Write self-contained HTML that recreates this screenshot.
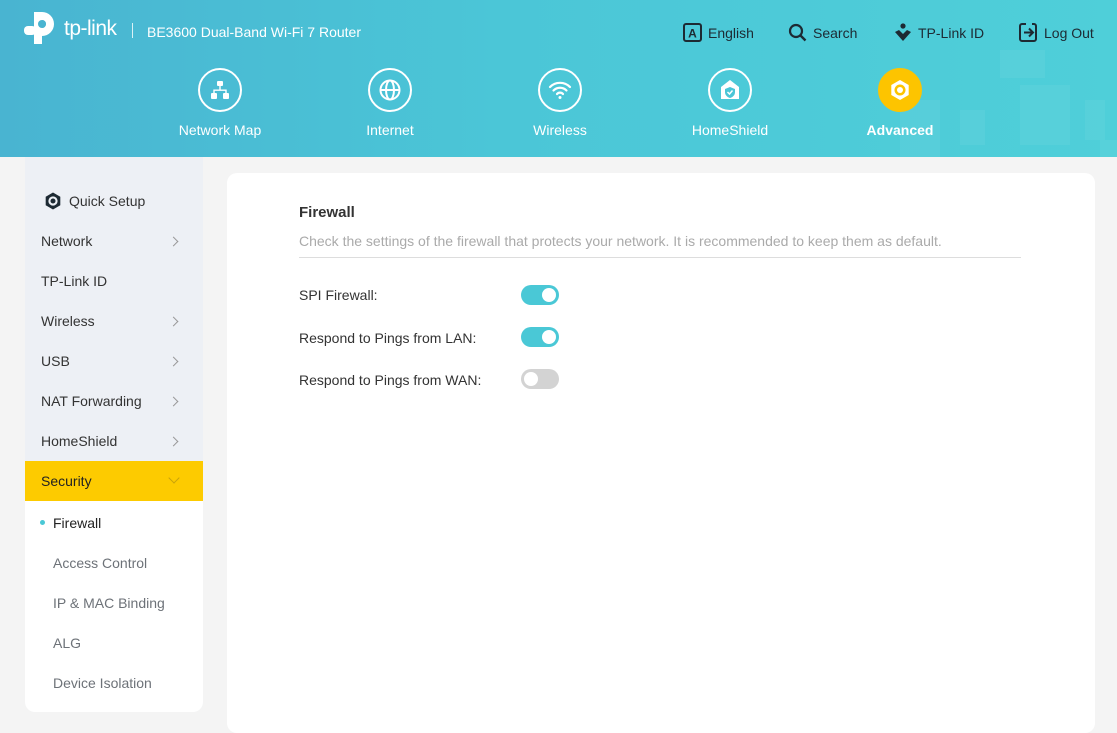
<!DOCTYPE html>
<html><head><meta charset="utf-8"><style>
*{margin:0;padding:0;box-sizing:border-box}
body{width:1117px;height:716px;overflow:hidden;background:#f4f4f4;font-family:"Liberation Sans",Arial,sans-serif;position:relative}
.hdr{position:absolute;left:0;top:0;width:1117px;height:157px;background:linear-gradient(90deg,#49b4d1 0%,#4bc6d7 45%,#4fcfd9 100%);overflow:hidden}
.sq{position:absolute;background:rgba(255,255,255,.05)}
.abs{position:absolute}
.top{position:absolute;top:23px;font-size:14px;color:#1d2a33;display:flex;align-items:center;gap:6px}
.nav{position:absolute;top:68px;width:120px;text-align:center;color:#fff;font-size:14px}
.nav .c{width:44px;height:44px;border:2px solid #fff;border-radius:50%;margin:0 auto 10px;display:flex;align-items:center;justify-content:center}
.side{position:absolute;left:25px;top:157px;width:178px;height:555px;background:#edf0f5;border-radius:0 0 10px 10px;overflow:hidden}
.it{position:absolute;left:16px;font-size:14px;color:#333}
.chev{position:absolute;left:145px;width:7px;height:7px;border-right:1.5px solid #999;border-top:1.5px solid #999;transform:rotate(45deg)}
.sub{position:absolute;left:0;top:344px;width:178px;height:211px;background:#fff}
.si{position:absolute;left:28px;font-size:14px;color:#6d7278}
.card{position:absolute;left:227px;top:173px;width:868px;height:560px;background:#fff;border-radius:10px}
.lbl{position:absolute;left:72px;font-size:14px;color:#333}
.tg{position:absolute;left:294px;width:38px;height:20px;border-radius:10px;background:#4ac8d6}
.tg:after{content:"";position:absolute;top:3px;right:3px;width:14px;height:14px;border-radius:50%;background:#fff}
.tg.off{background:#d3d3d3}
.tg.off:after{right:auto;left:3px}
</style></head><body>
<div class="hdr">
 <div class="sq" style="left:1000px;top:50px;width:45px;height:28px"></div>
 <div class="sq" style="left:1020px;top:85px;width:50px;height:60px"></div>
 <div class="sq" style="left:960px;top:110px;width:25px;height:35px"></div>
 <div class="sq" style="left:900px;top:100px;width:40px;height:57px"></div>
 <div class="sq" style="left:1085px;top:100px;width:20px;height:40px"></div>
 <div class="sq" style="left:1100px;top:140px;width:17px;height:17px"></div>
 <svg class="abs" style="left:24px;top:12px" width="30" height="32" viewBox="0 0 30 32"><path d="M10 0h8a12 12 0 0 1 0 24h-2v-8h2a4 4 0 0 0 0-8h-0v24h-8V12" fill="#fff"/><rect x="0" y="14" width="12" height="9" rx="4" fill="#fff"/><circle cx="18" cy="12" r="4" fill="#49b4d1"/></svg>
 <div class="abs" style="left:64px;top:17px;color:#fff;font-size:21px;letter-spacing:-.5px">tp-link</div>
 <div class="abs" style="left:132px;top:23px;width:1px;height:15px;background:#fff;opacity:.8"></div>
 <div class="abs" style="left:147px;top:24px;color:#fff;font-size:14px">BE3600 Dual-Band Wi-Fi 7 Router</div>
 <div class="top" style="left:683px"><svg width="19" height="19" viewBox="0 0 19 19"><rect x="1" y="1" width="17" height="17" rx="2" fill="none" stroke="#1d2a33" stroke-width="2"/><text x="9.5" y="14.5" font-size="12" font-weight="bold" text-anchor="middle" fill="#1d2a33" font-family="Liberation Sans">A</text></svg>English</div>
 <div class="top" style="left:788px"><svg width="19" height="19" viewBox="0 0 19 19"><circle cx="8" cy="8" r="6" fill="none" stroke="#1d2a33" stroke-width="2.2"/><path d="M12.5 12.5l5 5" stroke="#1d2a33" stroke-width="2.4"/></svg>Search</div>
 <div class="top" style="left:894px"><svg width="18" height="19" viewBox="0 0 18 19"><circle cx="9" cy="3" r="2.6" fill="#1d2a33"/><path d="M1 9l8 9 8-9-4-2-4 4-4-4z" fill="#1d2a33"/></svg>TP-Link ID</div>
 <div class="top" style="left:1019px"><svg width="19" height="19" viewBox="0 0 19 19"><path d="M7 1H3a2 2 0 0 0-2 2v13a2 2 0 0 0 2 2h12a2 2 0 0 0 2-2V3a2 2 0 0 0-2-2h-2" fill="none" stroke="#1d2a33" stroke-width="2"/><path d="M5 9.5h9M10 5.5l4 4-4 4" fill="none" stroke="#1d2a33" stroke-width="2"/></svg>Log Out</div>
 <div class="nav" style="left:160px"><div class="c"><svg width="22" height="22" viewBox="0 0 22 22" fill="#fff"><rect x="8" y="2" width="6" height="5" rx="1"/><rect x="2" y="14" width="6" height="6" rx="1"/><rect x="14" y="14" width="6" height="6" rx="1"/><path d="M10.3 7h1.4v3.5H17.7v3.5h-1.4v-2.1H5.7v2.1H4.3v-3.5h6z"/></svg></div>Network Map</div>
 <div class="nav" style="left:330px"><div class="c"><svg width="24" height="24" viewBox="0 0 24 24" fill="none" stroke="#fff" stroke-width="2"><circle cx="12" cy="12" r="9.5"/><ellipse cx="12" cy="12" rx="4" ry="9.5"/><path d="M2.5 12h19"/></svg></div>Internet</div>
 <div class="nav" style="left:500px"><div class="c"><svg width="24" height="22" viewBox="0 0 24 22" fill="none" stroke="#fff" stroke-width="2.2" stroke-linecap="round"><path d="M2 8a14 14 0 0 1 20 0M5.5 11.5a9 9 0 0 1 13 0M9 15a4 4 0 0 1 6 0"/><circle cx="12" cy="18.5" r="1.5" fill="#fff" stroke="none"/></svg></div>Wireless</div>
 <div class="nav" style="left:670px"><div class="c"><svg width="22" height="22" viewBox="0 0 22 22"><path d="M11 1L2 8v12h18V8z" fill="#fff"/><path d="M11 8l-5 2v3c0 3 2 5 5 6 3-1 5-3 5-6v-3z" fill="#4bc6d7"/><path d="M8.5 13l2 2 3-3.5" stroke="#fff" stroke-width="1.5" fill="none"/></svg></div>HomeShield</div>
 <div class="nav" style="left:840px;font-weight:bold"><div class="c" style="background:#fdc400;border-color:#fdc400"><svg width="26" height="26" viewBox="0 0 26 26"><path d="M13 3l8.7 5v10L13 23 4.3 18V8z" fill="#fff"/><circle cx="13" cy="13" r="5.5" fill="#fdc400"/><circle cx="13" cy="13" r="3" fill="#fff"/></svg></div>Advanced</div>
</div>
<div class="side">
 <svg class="abs" style="left:18px;top:34px" width="20" height="20" viewBox="0 0 26 26"><path d="M13 2l9.5 5.5v11L13 24 3.5 18.5v-11z" fill="#1d2a33"/><circle cx="13" cy="13" r="6" fill="#edf0f5"/><circle cx="13" cy="13" r="3.3" fill="#1d2a33"/></svg>
 <div class="it" style="left:44px;top:36px">Quick Setup</div>
 <div class="it" style="top:76px">Network</div><div class="chev" style="top:81px"></div>
 <div class="it" style="top:116px">TP-Link ID</div>
 <div class="it" style="top:156px">Wireless</div><div class="chev" style="top:161px"></div>
 <div class="it" style="top:196px">USB</div><div class="chev" style="top:201px"></div>
 <div class="it" style="top:236px">NAT Forwarding</div><div class="chev" style="top:241px"></div>
 <div class="it" style="top:276px">HomeShield</div><div class="chev" style="top:281px"></div>
 <div class="abs" style="left:0;top:304px;width:178px;height:40px;background:#fdcb00"></div>
 <div class="it" style="top:316px;color:#222">Security</div>
 <div class="abs" style="left:145px;top:317px;width:8px;height:8px;border-right:1.5px solid #c9a30a;border-bottom:1.5px solid #c9a30a;transform:rotate(45deg)"></div>
 <div class="sub">
  <div class="abs" style="left:15px;top:19px;width:5px;height:5px;border-radius:50%;background:#4ac8d6"></div>
  <div class="si" style="top:14px;color:#222">Firewall</div>
  <div class="si" style="top:54px">Access Control</div>
  <div class="si" style="top:94px">IP &amp; MAC Binding</div>
  <div class="si" style="top:134px">ALG</div>
  <div class="si" style="top:174px">Device Isolation</div>
 </div>
</div>
<div class="card">
 <div class="abs" style="left:72px;top:31px;font-size:15px;font-weight:bold;color:#333">Firewall</div>
 <div class="abs" style="left:72px;top:60px;font-size:14px;color:#aaa">Check the settings of the firewall that protects your network. It is recommended to keep them as default.</div>
 <div class="abs" style="left:72px;top:84px;width:722px;height:1px;background:#ddd"></div>
 <div class="lbl" style="top:114px">SPI Firewall:</div><div class="tg" style="top:112px"></div>
 <div class="lbl" style="top:157px">Respond to Pings from LAN:</div><div class="tg" style="top:154px"></div>
 <div class="lbl" style="top:199px">Respond to Pings from WAN:</div><div class="tg off" style="top:196px"></div>
</div>
</body></html>
